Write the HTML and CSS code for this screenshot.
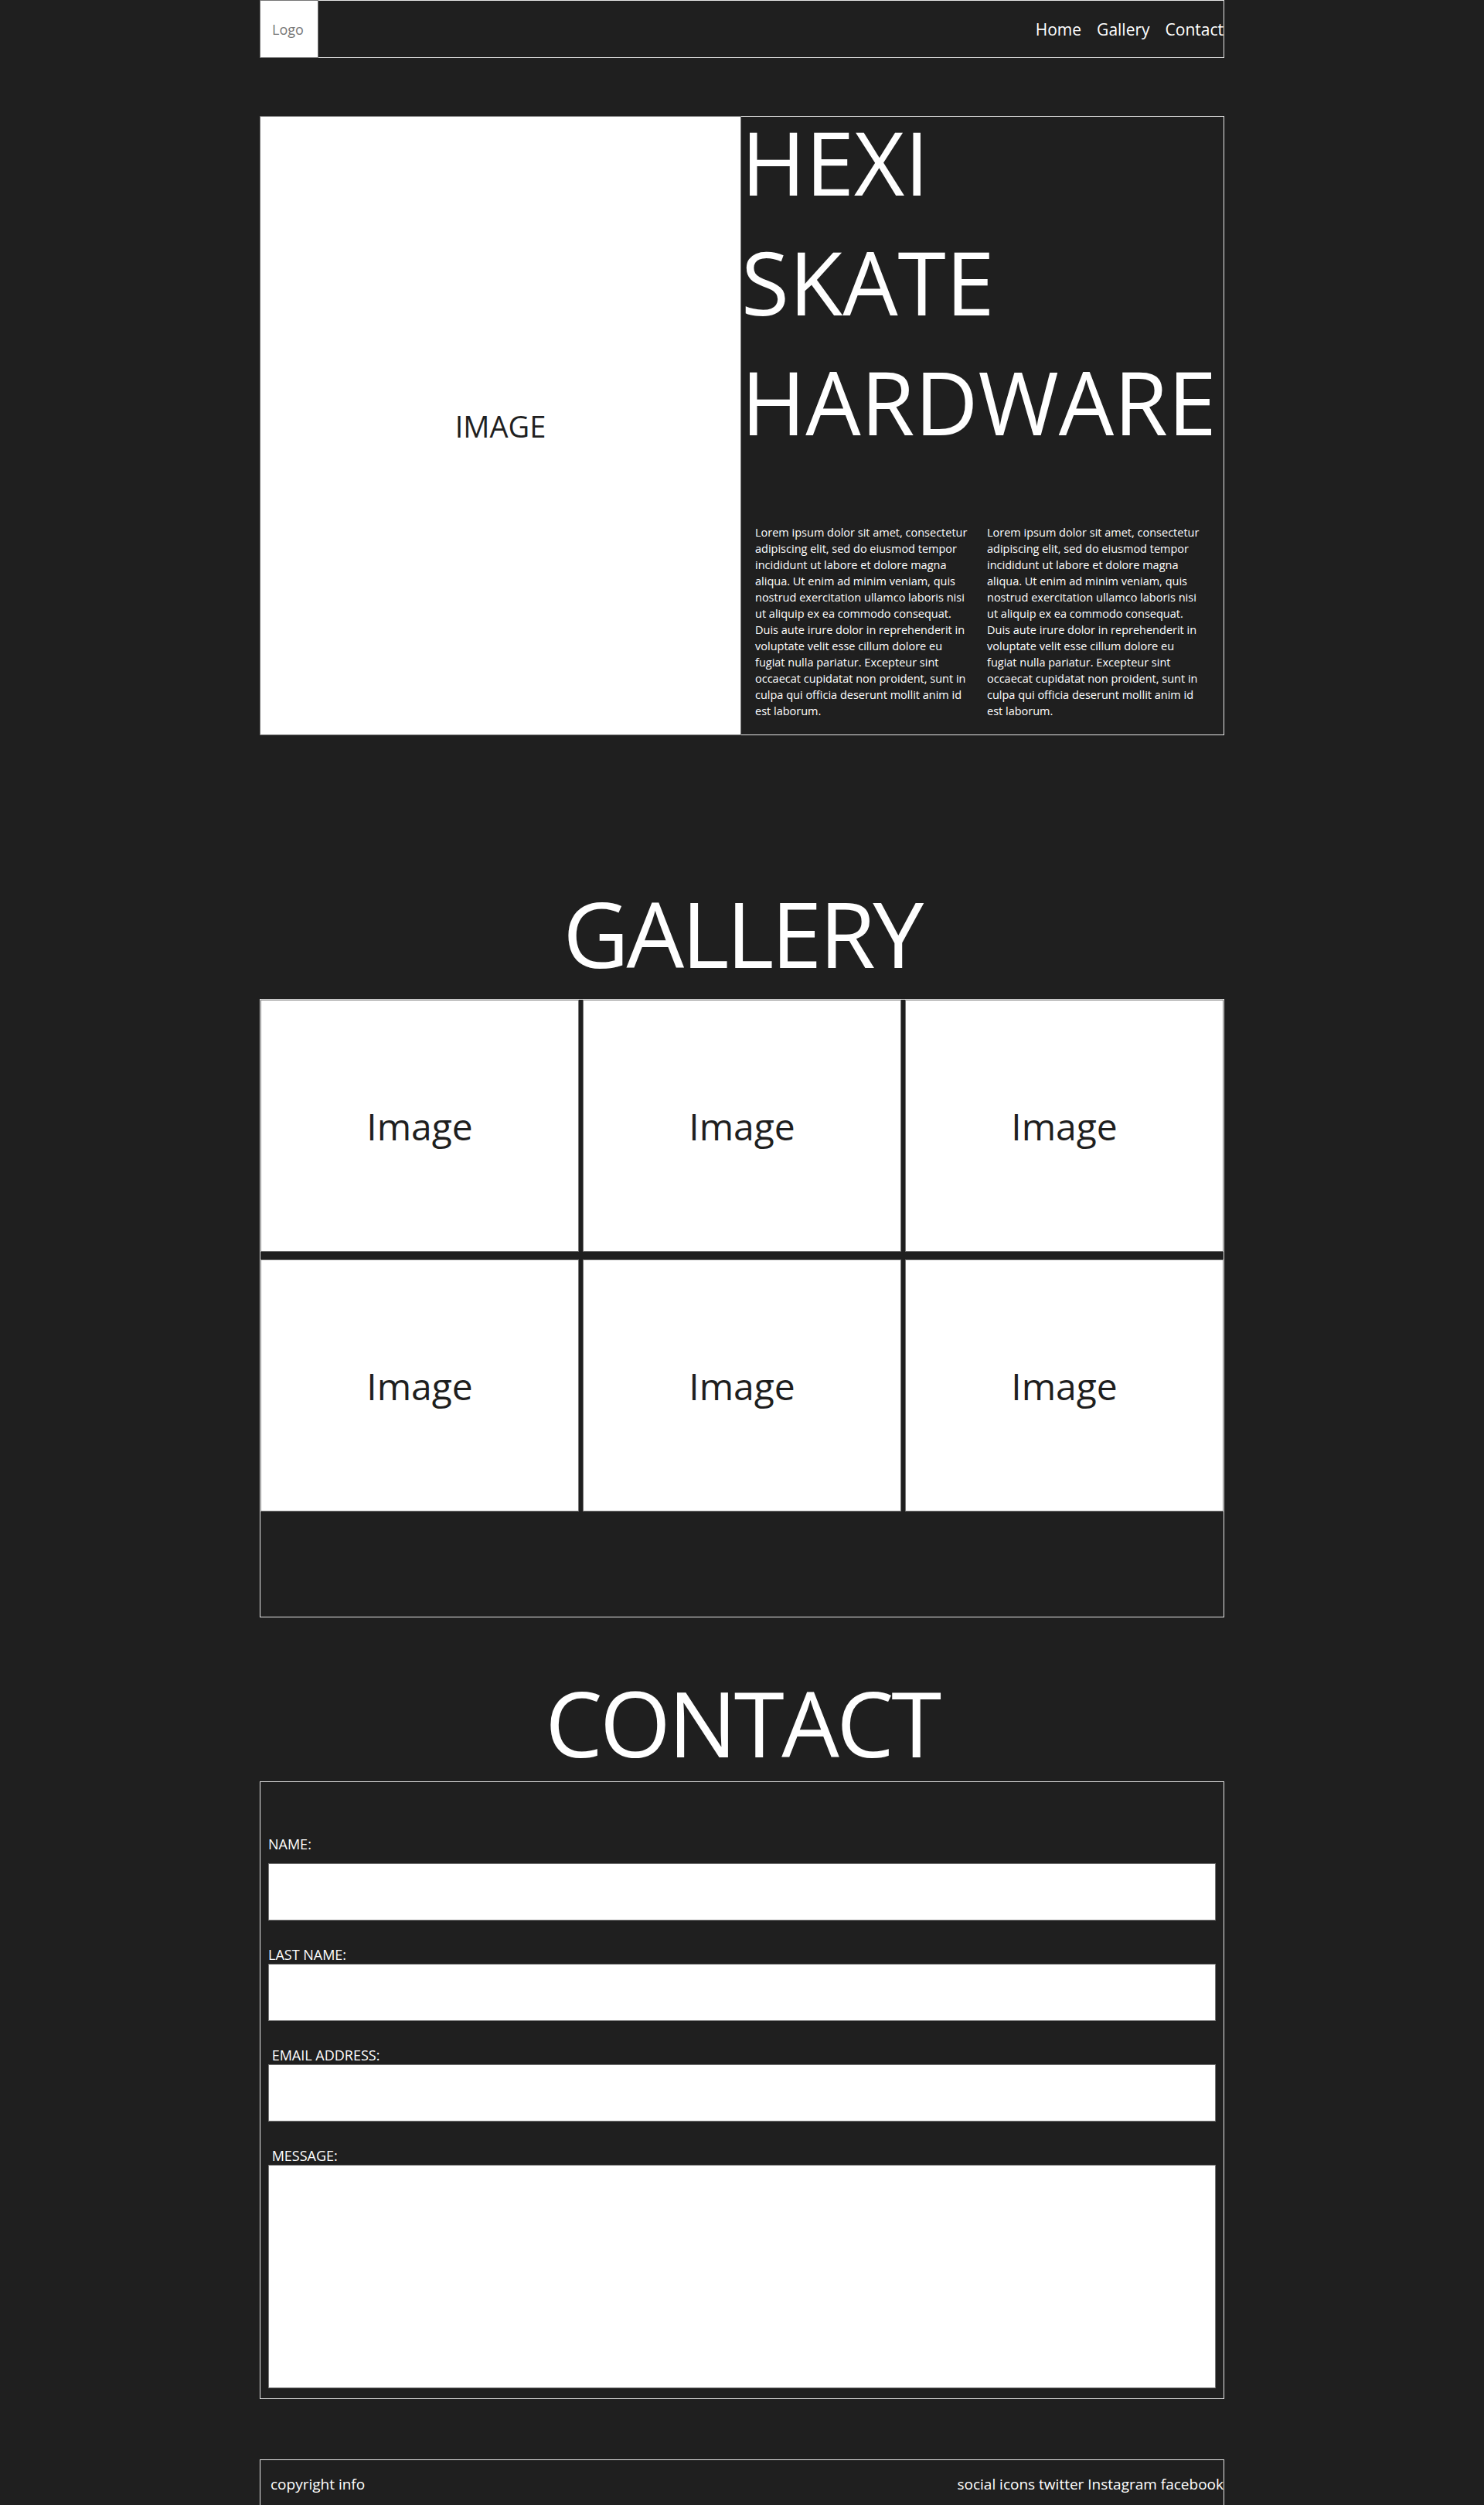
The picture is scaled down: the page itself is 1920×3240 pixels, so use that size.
FILE: index.html
```html
<!DOCTYPE html>
<html lang="en">
<head>
  <meta charset="UTF-8">
  <meta name="viewport" content="width=device-width, initial-scale=1.0">
  <title>HEXI SKATE HARDWARE</title>
  <link rel="stylesheet" href="styles.css">
</head>
<body>
  <div class="page">
    <header class="site-header">
      <div class="logo">Logo</div>
      <nav class="nav">
        <a href="#home">Home</a>
        <a href="#gallery">Gallery</a>
        <a href="#contact">Contact</a>
      </nav>
    </header>

    <section class="hero" id="home">
      <div class="hero-image">IMAGE</div>
      <div class="hero-text">
        <h1><span>HEXI</span> <span>SKATE</span> <span>HARDWARE</span></h1>
        <div class="hero-copy">
          <p>Lorem ipsum dolor sit amet, consectetur adipiscing elit, sed do eiusmod tempor incididunt ut labore et dolore magna aliqua. Ut enim ad minim veniam, quis nostrud exercitation ullamco laboris nisi ut aliquip ex ea commodo consequat. Duis aute irure dolor in reprehenderit in voluptate velit esse cillum dolore eu fugiat nulla pariatur. Excepteur sint occaecat cupidatat non proident, sunt in culpa qui officia deserunt mollit anim id est laborum.</p>
          <p>Lorem ipsum dolor sit amet, consectetur adipiscing elit, sed do eiusmod tempor incididunt ut labore et dolore magna aliqua. Ut enim ad minim veniam, quis nostrud exercitation ullamco laboris nisi ut aliquip ex ea commodo consequat. Duis aute irure dolor in reprehenderit in voluptate velit esse cillum dolore eu fugiat nulla pariatur. Excepteur sint occaecat cupidatat non proident, sunt in culpa qui officia deserunt mollit anim id est laborum.</p>
        </div>
      </div>
    </section>

    <h2 class="section-title gallery-title" id="gallery">GALLERY</h2>
    <section class="gallery">
      <div class="gallery-item">Image</div>
      <div class="gallery-item">Image</div>
      <div class="gallery-item">Image</div>
      <div class="gallery-item">Image</div>
      <div class="gallery-item">Image</div>
      <div class="gallery-item">Image</div>
    </section>

    <h2 class="section-title contact-title" id="contact">CONTACT</h2>
    <form class="contact-form">
      <label for="name" class="first">NAME:</label>
      <input id="name" name="name" class="first-input">
      <label for="lastname">LAST NAME:</label>
      <input id="lastname" name="lastname">
      <label for="email">&nbsp;EMAIL ADDRESS:</label>
      <input id="email" name="email" type="email">
      <label for="message">&nbsp;MESSAGE:</label>
      <textarea id="message" name="message"></textarea>
    </form>

    <footer class="site-footer">
      <span>copyright info</span>
      <span>social icons twitter Instagram facebook</span>
    </footer>
  </div>
</body>
</html>
```

FILE: styles.css
```css
* {
  box-sizing: border-box;
}

body {
  background-color: #1f1f1f;
  color: white;
  margin: 0;
  font-family: 'Open Sans', 'Noto Sans', sans-serif;
}

.page {
  width: 1248px;
  margin: 0 auto;
}

/* header */
.site-header {
  height: 75px;
  border: 1px solid #e6e6e6;
  display: flex;
  justify-content: space-between;
  align-items: stretch;
}

.logo {
  width: 76px;
  margin: -1px 0 -1px -1px;
  background-color: white;
  border: 1px solid #767676;
  color: #777;
  font-size: 18px;
  padding-left: 15px;
  display: flex;
  align-items: center;
}

.nav {
  display: flex;
  align-items: center;
  gap: 20px;
  font-size: 21px;
}

.nav a {
  color: white;
  text-decoration: none;
}

/* hero */
.hero {
  margin-top: 75px;
  height: 801px;
  border: 1px solid #e6e6e6;
  display: grid;
  grid-template-columns: 622px 1fr;
}

.hero-image {
  background-color: white;
  border: 1px solid #767676;
  margin: -1px 0 -1px -1px;
  color: #1f1f1f;
  font-size: 38px;
  display: flex;
  align-items: center;
  justify-content: center;
}

.hero-text {
  display: flex;
  flex-direction: column;
  justify-content: space-between;
}

.hero-text h1 {
  font-size: 113px;
  font-weight: 400;
  line-height: 117px;
  margin: 0;
}

.hero-text h1 span {
  display: block;
  margin-bottom: 38px;
}

.hero-copy {
  display: grid;
  grid-template-columns: 280px 280px;
  column-gap: 20px;
  padding: 0 16px 20px 18px;
  font-size: 14.5px;
  line-height: 21px;
}

.hero-copy p {
  margin: 0;
}

/* section titles */
.section-title {
  font-size: 118px;
  font-weight: 400;
  letter-spacing: -3.5px;
  line-height: 144px;
  text-align: center;
}

.gallery-title {
  margin: 184px 0 13px;
}

.contact-title {
  margin: 64px 0 4px;
}

/* gallery */
.gallery {
  height: 800px;
  border: 1px solid #e6e6e6;
  display: grid;
  grid-template-columns: repeat(3, 1fr);
  grid-template-rows: 326px 326px;
  column-gap: 5px;
  row-gap: 10px;
  align-content: start;
}

.gallery-item {
  background-color: white;
  border: 1px solid #767676;
  color: #1f1f1f;
  font-size: 48px;
  display: flex;
  align-items: center;
  justify-content: center;
}

/* contact form */
.contact-form {
  border: 1px solid #e6e6e6;
  padding: 68px 10px 13px;
}

.contact-form label {
  display: block;
  font-size: 18px;
  line-height: 24px;
  margin-top: 32px;
}

.contact-form label.first {
  margin-top: 0;
}

.contact-form input,
.contact-form textarea {
  display: block;
  width: 100%;
  height: 74px;
  margin: 0;
  background-color: white;
  border: 1px solid #767676;
  font-family: inherit;
}

.contact-form input.first-input {
  margin-top: 13px;
}

.contact-form textarea {
  height: 289px;
  resize: none;
}

/* footer */
.site-footer {
  margin-top: 78px;
  border: 1px solid #e6e6e6;
  padding: 18px 0 18px 13px;
  display: flex;
  justify-content: space-between;
  font-size: 19px;
}
```
